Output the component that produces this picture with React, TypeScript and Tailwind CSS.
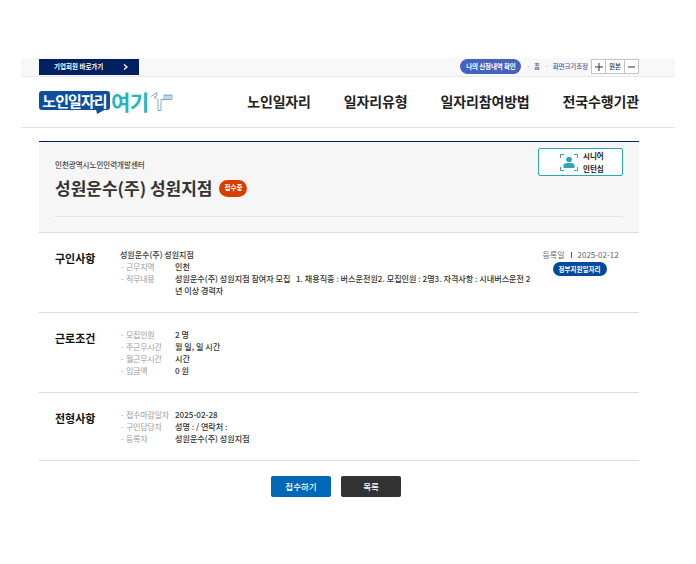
import React from "react";

const font = { fontFamily: '"Noto Sans CJK KR", "Noto Sans", sans-serif' };

function Logo() {
  return (
    <div className="flex items-center h-[23px]">
      <div className="relative w-[71px] h-[19px] -mt-[3px] bg-[#0d4f9e] rounded-[3px] flex items-center justify-center">
        <span className="text-white text-[15px] font-bold leading-none tracking-[-0.9px]">노인일자리</span>
        <svg className="absolute left-[57px] top-[18px]" width="10" height="5" viewBox="0 0 10 5"><path d="M0 0H10L1 5Z" fill="#0d4f9e" /></svg>
      </div>
      <span className="ml-[1px] -mt-[2px] text-[#1fb5c4] text-[21px] font-bold leading-none tracking-[-0.5px]">여기</span>
      <svg className="ml-[1px] -mt-[2px]" width="23" height="21" viewBox="0 0 23 21" fill="none" stroke="#4a86b8" strokeWidth="0.7">
        <path d="M1 5.5L7 1.5V4.5L4 6.5C5.5 6.5 8 7.5 8 10V19.5H11V8.5H22V4H14V8.5" />
        <path d="M16 4V8M18 4V8M20 4V8" />
      </svg>
    </div>
  );
}

function Pair({ k, v }: { k: string; v: React.ReactNode }) {
  return (
    <div className="flex">
      <div className="w-[55px] shrink-0 text-[#9a9a9a] tracking-[-0.2px]">· {k}</div>
      <div className="flex-1 text-[#333] font-medium text-[8.1px]">{v}</div>
    </div>
  );
}

function Section({ title, children, aside, height }: { title: string; children: React.ReactNode; aside?: React.ReactNode; height: string }) {
  return (
    <div className={`flex border-b border-[#dcdcdc] pl-[16px] pr-[21px] pt-[17px] ${height}`}>
      <h3 className="w-[65px] shrink-0 text-[11px] leading-[16px] font-bold text-[#111]">{title}</h3>
      <div className="flex-1 -mt-[1px] text-[8px] leading-[12px]">{children}</div>
      {aside}
    </div>
  );
}

export default function App() {
  return (
    <div style={font} className="min-h-[564px] bg-white pt-[58px] pl-[21px] text-[#222]">
      <div className="w-[654px]">
        <div className="h-[19px] bg-[#f8f8f8] border-b border-[#e8e8e8] pl-[18px] pr-[36px] pt-[1px] flex justify-between items-start">
          <a className="w-[100px] h-[16px] bg-[#00205f] text-white flex items-center text-[6.5px] font-bold pl-[15px]">
            <span className="w-[69px]">기업회원 바로가기</span>
            <svg width="5" height="6" viewBox="0 0 5 6" fill="none" stroke="#fff" strokeWidth="1.3"><path d="M1 0.5L4 3L1 5.5" /></svg>
          </a>
          <div className="flex items-center h-[15px] text-[6.5px]">
            <span className="w-[61px] h-[15px] rounded-full bg-[#4463bd] text-white font-bold flex items-center justify-center tracking-[-0.15px]">나의 신청내역 확인</span>
            <span className="ml-[5px] text-[#8a93a8]">·</span>
            <span className="ml-[4px] text-[#4a5fa8] font-medium">홈</span>
            <span className="ml-[5px] text-[#8a93a8]">·</span>
            <span className="ml-[4px] text-[#4a5fa8] font-medium tracking-[-0.1px]">화면크기조정</span>
            <div className="ml-[3px] w-[48px] h-[15px] border border-[#c4c4c4] bg-white flex text-[#333]">
              <span className="w-[14px] flex items-center justify-center border-r border-[#c4c4c4]">
                <svg width="8" height="8" viewBox="0 0 8 8" stroke="#333" strokeWidth="1"><path d="M0 4H8M4 0V8" /></svg>
              </span>
              <span className="w-[19px] flex items-center justify-center border-r border-[#c4c4c4] font-medium">원본</span>
              <span className="flex-1 flex items-center justify-center">
                <svg width="7" height="2" viewBox="0 0 7 2" stroke="#333" strokeWidth="1"><path d="M0 1H7" /></svg>
              </span>
            </div>
          </div>
        </div>

        <div className="h-[51px] border-b border-[#e2e2e2] pl-[18px] pr-[36px] flex items-center justify-between">
          <Logo />
          <nav className="flex gap-[33px] text-[14px] font-bold text-[#222] tracking-[-0.15px] -mt-[1px]">
            <a>노인일자리</a>
            <a>일자리유형</a>
            <a>일자리참여방법</a>
            <a>전국수행기관</a>
          </nav>
        </div>

        <div className="w-[600px] ml-[18px] mt-[13px]">
          <div className="h-[92px] border-t border-[#00206b] border-b border-b-[#dcdcdc] bg-[#f6f6f6] px-[16px] relative">
            <div className="h-[75px] border-b border-[#e6e6e6] pt-[17px]">
              <p className="text-[7.5px] leading-[12px] text-[#444] font-medium">인천광역시노인인력개발센터</p>
              <div className="flex items-center mt-[4px]">
                <h2 className="text-[17px] leading-[26px] font-bold text-[#333]">성원운수(주) 성원지점</h2>
                <span className="ml-[7px] w-[28px] h-[17px] rounded-full bg-[#d63f00] text-white text-[6.5px] font-bold flex items-center justify-center">접수중</span>
              </div>
            </div>
            <a className="absolute right-[16px] top-[6px] w-[85px] h-[28px] bg-white border border-[#2ba6b5] rounded-[2px] flex items-center pl-[21px]">
              <svg width="18" height="17" viewBox="0 0 18 17" fill="none">
                <path d="M0.5 4V0.5H4M14 0.5H17.5V4M0.5 13V16.5H4M14 16.5H17.5V13" stroke="#2ba6b5" strokeWidth="1" />
                <circle cx="9" cy="5.5" r="2.8" fill="#2ba6b5" />
                <path d="M3.5 14V11.5C3.5 9.5 6 9 9 9S14.5 9.5 14.5 11.5V14Z" fill="#2ba6b5" />
              </svg>
              <span className="ml-[5px] text-[7.5px] leading-[13px] font-bold text-[#222]">시니어<br />인턴십</span>
            </a>
          </div>

          <Section
            height="h-[80px]"
            title="구인사항"
            aside={
              <div className="w-[75px] -ml-[16px] -mt-[1px] shrink-0 flex flex-col items-center text-[8px] leading-[12px] text-[#666]">
                <div className="flex items-center whitespace-nowrap">등록일<span className="w-[1px] h-[6px] bg-[#555] mx-[6px]" />2025-02-12</div>
                <span className="mt-[1px] -ml-[2px] w-[54px] h-[14px] rounded-full bg-[#004a9c] text-white font-bold text-[6.5px] flex items-center justify-center">정부지원일자리</span>
              </div>
            }
          >
            <div className="text-[#333] font-medium">성원운수(주) 성원지점</div>
            <Pair k="근무지역" v="인천" />
            <Pair k="직무내용" v={<>성원운수(주) 성원지점 참여자 모집&nbsp;&nbsp; 1. 채용직종 : 버스운전원2. 모집인원 : 2명3. 자격사항 : 시내버스운전 2<br />년 이상 경력자</>} />
          </Section>

          <Section height="h-[80px]" title="근로조건">
            <Pair k="모집인원" v="2 명" />
            <Pair k="주근무시간" v="월 일, 일 시간" />
            <Pair k="월근무시간" v="시간" />
            <Pair k="임금액" v="0 원" />
          </Section>

          <Section height="h-[68px]" title="전형사항">
            <Pair k="접수마감일자" v="2025-02-28" />
            <Pair k="구인담당자" v="성명 : / 연락처 :" />
            <Pair k="등록자" v="성원운수(주) 성원지점" />
          </Section>

          <div className="flex justify-center gap-[10px] mt-[15px] pr-[6px] text-[8.5px] font-medium text-white">
            <a className="w-[60px] h-[21px] bg-[#0068b7] rounded-[2px] flex items-center justify-center">접수하기</a>
            <a className="w-[60px] h-[21px] bg-[#333] rounded-[2px] flex items-center justify-center">목록</a>
          </div>
        </div>
      </div>
    </div>
  );
}
